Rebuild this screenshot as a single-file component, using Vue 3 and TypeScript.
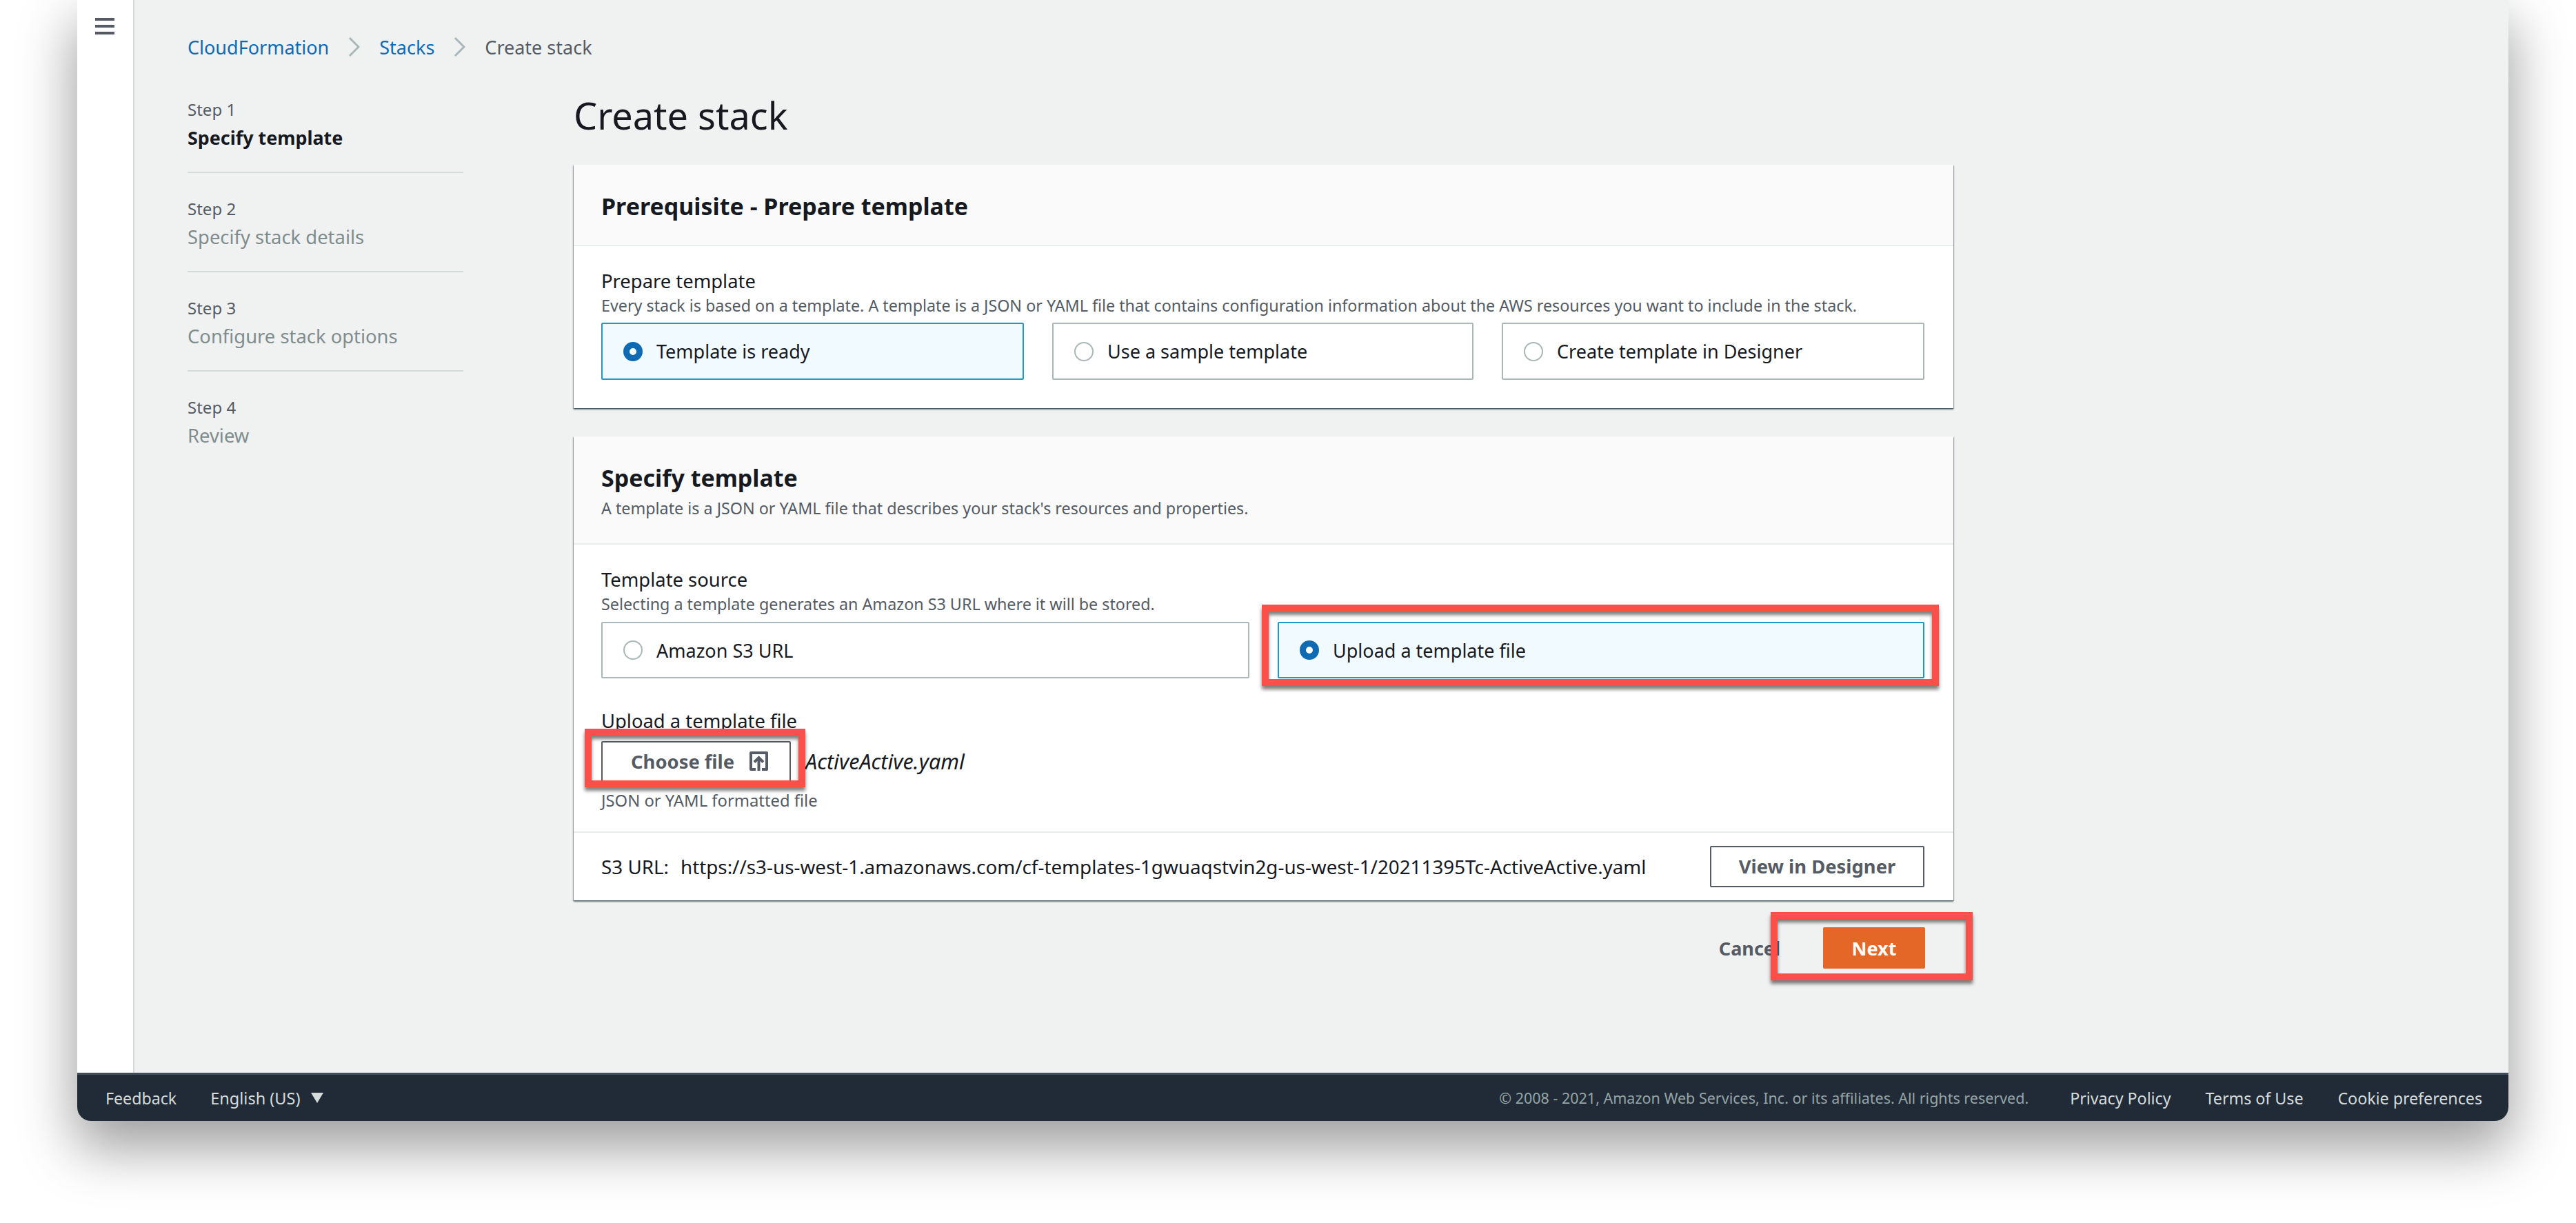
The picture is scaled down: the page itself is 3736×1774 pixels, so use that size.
<script setup lang="ts">
interface Step {
  label: string;
  name: string;
  active?: boolean;
}

const steps: Step[] = [
  { label: 'Step 1', name: 'Specify template', active: true },
  { label: 'Step 2', name: 'Specify stack details' },
  { label: 'Step 3', name: 'Configure stack options' },
  { label: 'Step 4', name: 'Review' },
];

const prepareOptions = [
  { label: 'Template is ready', selected: true },
  { label: 'Use a sample template', selected: false },
  { label: 'Create template in Designer', selected: false },
];
</script>

<template>
  <div class="page">
    <div class="window">
      <div class="main">
        <aside class="rail">
          <svg class="menu" viewBox="0 0 28 24" width="28" height="24">
            <path d="M0 2h28M0 12h28M0 22h28" fill="none" stroke="#545b64" stroke-width="4" />
          </svg>
        </aside>
        <div class="content">
          <nav class="crumbs">
            <a class="link">CloudFormation</a>
            <svg class="chev" viewBox="0 0 17 30" width="17" height="30"><path d="M2 2l13 13L2 28" /></svg>
            <a class="link">Stacks</a>
            <svg class="chev" viewBox="0 0 17 30" width="17" height="30"><path d="M2 2l13 13L2 28" /></svg>
            <span class="here">Create stack</span>
          </nav>
          <div class="columns">
            <ul class="wizard">
              <li v-for="s in steps" :key="s.label" class="step">
                <div class="step-label">{{ s.label }}</div>
                <div class="step-name" :class="{ on: s.active }">{{ s.name }}</div>
              </li>
            </ul>
            <div class="form">
              <h1>Create stack</h1>

              <section class="panel first">
                <header class="panel-head">
                  <h2>Prerequisite - Prepare template</h2>
                </header>
                <div class="panel-body">
                  <div class="label">Prepare template</div>
                  <div class="desc">Every stack is based on a template. A template is a JSON or YAML file that contains configuration information about the AWS resources you want to include in the stack.</div>
                  <div class="tiles three">
                    <div v-for="o in prepareOptions" :key="o.label" class="tile" :class="{ sel: o.selected }">
                      <span class="radio"></span>{{ o.label }}
                    </div>
                  </div>
                </div>
              </section>

              <section class="panel">
                <header class="panel-head">
                  <h2>Specify template</h2>
                  <div class="desc head-desc">A template is a JSON or YAML file that describes your stack's resources and properties.</div>
                </header>
                <div class="panel-body source">
                  <div class="label">Template source</div>
                  <div class="desc">Selecting a template generates an Amazon S3 URL where it will be stored.</div>
                  <div class="tiles two">
                    <div class="tile"><span class="radio"></span>Amazon S3 URL</div>
                    <div class="tile sel">
                      <span class="radio"></span>Upload a template file
                      <span class="callout c-upload"></span>
                    </div>
                  </div>
                  <div class="label upload-label">Upload a template file</div>
                  <div class="file-row">
                    <button class="btn choose">
                      Choose file
                      <svg viewBox="0 0 27 28" width="27" height="28" class="up">
                        <path d="M9 26H2V2h23v24h-7" fill="none" stroke="#545b64" stroke-width="4" stroke-linejoin="round" />
                        <path d="M13.5 28V10M7 15.5l6.500-6.500 6.500 6.500" fill="none" stroke="#545b64" stroke-width="4" />
                      </svg>
                      <span class="callout c-choose"></span>
                    </button>
                    <span class="file-name">ActiveActive.yaml</span>
                  </div>
                  <div class="desc hint">JSON or YAML formatted file</div>
                </div>
                <div class="url-row">
                  <span class="s3">S3 URL:</span>
                  <span class="url">https://s3-us-west-1.amazonaws.com/cf-templates-1gwuaqstvin2g-us-west-1/20211395Tc-ActiveActive.yaml</span>
                  <button class="btn designer">View in Designer</button>
                </div>
              </section>

              <div class="actions">
                <span class="cancel">Cancel</span>
                <button class="next">
                  Next
                  <span class="callout c-next"></span>
                </button>
              </div>
            </div>
          </div>
        </div>
      </div>
      <footer class="foot">
        <span class="feedback">Feedback</span>
        <span class="lang">English (US)</span>
        <span class="tri"></span>
        <span class="copy">© 2008 - 2021, Amazon Web Services, Inc. or its affiliates. All rights reserved.</span>
        <span class="privacy">Privacy Policy</span>
        <span class="terms">Terms of Use</span>
        <span class="cookie">Cookie preferences</span>
      </footer>
    </div>
  </div>
</template>

<style>
body {
  margin: 0;
  background: #fff;
}
</style>

<style scoped>
.page {
  height: 1774px;
  padding-left: 112px;
  box-sizing: border-box;
  overflow: hidden;
  background: #fff;
}

.window {
  width: 3526px;
  height: 1626px;
  display: flex;
  flex-direction: column;
  border-radius: 0 0 20px 20px;
  box-shadow: 0 36px 80px 4px rgba(0, 0, 0, 0.38);
  font-family: "Noto Sans", sans-serif;
  font-size: 24px;
  color: #16191f;
}

.main {
  flex: 1;
  display: flex;
  min-height: 0;
  background: #f0f1f1;
}

.rail {
  flex: none;
  background: #fff;
  border-right: 2px solid #d5dbdb;
  padding: 26px 0 0 26px;
  width: 55px;
}

.menu {
  display: block;
}

.content {
  flex: 1;
  padding: 48px 0 0 77px;
}

.crumbs {
  display: flex;
  align-items: center;
  height: 40px;
  margin-bottom: 47px;
  font-size: 27px;
}

.link {
  color: #0f6ab4;
}

.here {
  color: #545b64;
}

.chev {
  margin: 0 28px;
}

.chev path {
  fill: none;
  stroke: #aab7b8;
  stroke-width: 3;
}

.columns {
  display: flex;
}

.wizard {
  list-style: none;
  margin: 0 160px 0 0;
  padding: 8px 0 0;
  width: 400px;
  flex: none;
}

.step {
  padding-bottom: 29px;
  margin-bottom: 36px;
  border-bottom: 2px solid #d5dbdb;
}

.step:last-child {
  border-bottom: 0;
}

.step-label {
  color: #545b64;
  line-height: 32px;
  margin-bottom: 5px;
}

.step-name {
  color: #7f8d8e;
  font-size: 27.4px;
  line-height: 40px;
}

.step-name.on {
  color: #16191f;
  font-size: 26.9px;
  font-weight: 700;
}

.form {
  width: 2001px;
}

h1 {
  margin: 0 0 40px;
  font-size: 54px;
  font-weight: 400;
  line-height: 64px;
}

.panel {
  background: #fff;
  box-shadow: 0 2px 2px rgba(0, 28, 36, 0.5), 1px 1px 1px rgba(0, 28, 36, 0.25), -1px 1px 1px rgba(0, 28, 36, 0.25);
}

.panel.first {
  margin-bottom: 41px;
}

.panel-head {
  background: #fafafa;
  border-bottom: 2px solid #eaeded;
  padding: 40px 40px 36px;
}

h2 {
  margin: 0;
  font-size: 34px;
  font-weight: 700;
  line-height: 40px;
}

.panel-body {
  padding: 35px 42px 41px 40px;
}

.panel-body.source {
  padding-bottom: 30px;
}

.label {
  font-size: 27.4px;
  line-height: 32px;
}

.desc {
  margin-top: 4px;
  color: #545b64;
  font-size: 23.3px;
  line-height: 30px;
}

.head-desc {
  margin-top: 9px;
}

.tiles {
  display: grid;
  margin-top: 10px;
  gap: 41px;
}

.tiles.three {
  grid-template-columns: 613px 611px 613px;
}

.tiles.two {
  grid-template-columns: 940px 938px;
  margin-top: 11px;
}

.tile {
  position: relative;
  height: 83px;
  box-sizing: border-box;
  display: flex;
  align-items: center;
  padding-left: 30px;
  border: 2px solid #aab7b8;
  border-radius: 2px;
  font-size: 27px;
}

.two .tile {
  height: 82px;
}

.tile.sel {
  background: #f1faff;
  border-color: #1b9ac8;
}

.radio {
  width: 28px;
  height: 28px;
  box-sizing: border-box;
  border: 2px solid #aab7b8;
  border-radius: 50%;
  background: #fff;
  margin-right: 20px;
  flex: none;
}

.sel .radio {
  border: 9px solid #0f6ab4;
}

.upload-label {
  margin-top: 46px;
}

.file-row {
  display: flex;
  align-items: center;
  margin-top: 13px;
}

.btn {
  position: relative;
  height: 60px;
  box-sizing: border-box;
  background: #fff;
  border: 2px solid #545b64;
  border-radius: 2px;
  color: #545b64;
  font-family: inherit;
  font-size: 27.4px;
  font-weight: 700;
  display: flex;
  align-items: center;
  padding: 0 0 2px;
}

.choose {
  width: 275px;
  padding-left: 41px;
}

.up {
  margin-left: 22px;
}

.file-name {
  margin: 0 0 3px 21px;
  font-size: 30.5px;
  font-style: italic;
}

.hint {
  margin-top: 11px;
  font-size: 23.8px;
}

.url-row {
  height: 100px;
  box-sizing: border-box;
  border-top: 2px solid #eaeded;
  display: flex;
  align-items: center;
  padding: 0 42px 0 40px;
  font-size: 27.8px;
}

.url {
  margin-left: 17px;
}

.designer {
  margin-left: auto;
  width: 311px;
  justify-content: center;
}

.actions {
  display: flex;
  align-items: center;
  justify-content: flex-end;
  margin-top: 39px;
  padding-right: 41px;
  font-size: 27px;
  font-weight: 700;
  color: #545b64;
}

.next {
  position: relative;
  width: 148px;
  height: 60px;
  margin-left: 62px;
  border: 0;
  border-radius: 2px;
  background: #e56727;
  color: #fff;
  font-family: inherit;
  font-size: 27px;
  font-weight: 700;
}

.callout {
  position: absolute;
  border: 10px solid #fb5049;
  box-shadow: 0 5px 5px rgba(0, 0, 0, 0.5), inset 0 5px 5px rgba(0, 0, 0, 0.5);
  z-index: 2;
  pointer-events: none;
}

.c-upload {
  left: -25px;
  right: -23px;
  top: -27px;
  bottom: -13px;
}

.c-choose {
  left: -26px;
  right: -23px;
  top: -20px;
  bottom: -9px;
}

.c-next {
  left: -76px;
  right: -69px;
  top: -22px;
  bottom: -17px;
}

.foot {
  height: 70px;
  flex: none;
  box-sizing: border-box;
  background: #212b37;
  border-top: 3px solid #414d5c;
  border-radius: 0 0 20px 20px;
  display: flex;
  align-items: center;
  padding: 0 38px 0 41px;
  color: #d5dbdb;
  font-size: 23.2px;
}

.lang {
  margin-left: 49px;
  font-size: 23.5px;
}

.tri {
  margin-left: 16px;
  width: 0;
  height: 0;
  border-left: 9px solid transparent;
  border-right: 9px solid transparent;
  border-top: 15px solid #d5dbdb;
}

.copy {
  margin-left: auto;
  color: #95a5a6;
  font-size: 21.5px;
}

.privacy {
  margin-left: 60px;
}

.terms,
.cookie {
  margin-left: 50px;
}
</style>
